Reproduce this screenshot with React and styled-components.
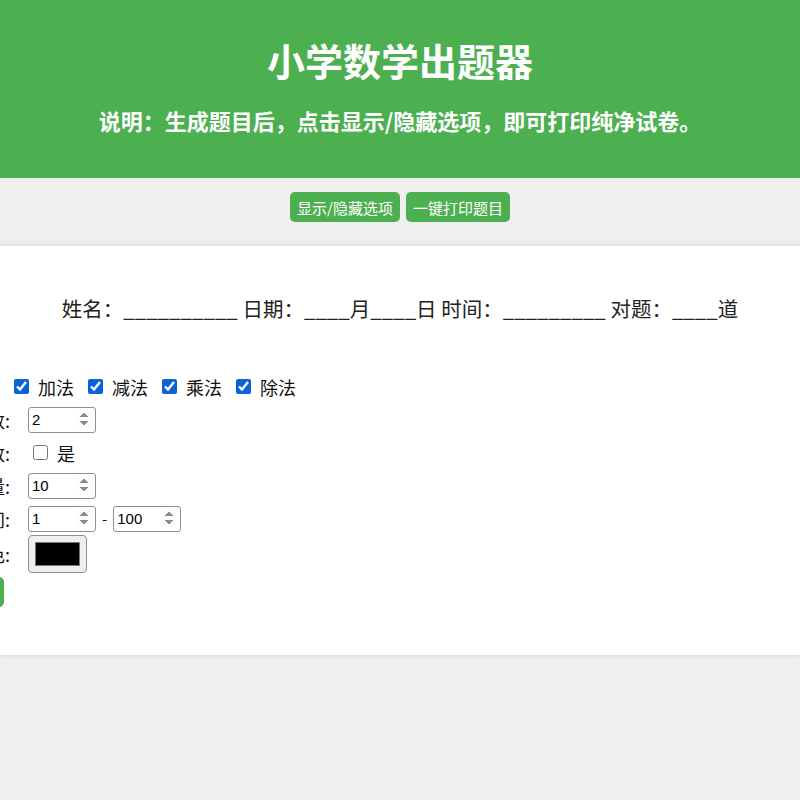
import React, { useState } from 'react';
import styled, { createGlobalStyle } from 'styled-components';

const GlobalStyle = createGlobalStyle`
  body {
    margin: 0;
    background: #efefef;
    font-family: "Noto Sans CJK SC", "Liberation Sans", sans-serif;
    overflow: hidden;
  }
`;

const App = () => {
  const [ops, setOps] = useState({ add: true, sub: true, mul: true, div: true });
  const [decimal, setDecimal] = useState(false);

  const toggle = (key) => setOps({ ...ops, [key]: !ops[key] });

  return (
    <Page>
      <GlobalStyle />
      <Header>
        <Title>小学数学出题器</Title>
        <Subtitle>说明：生成题目后，点击显示/隐藏选项，即可打印纯净试卷。</Subtitle>
      </Header>

      <Toolbar>
        <GreenButton>显示/隐藏选项</GreenButton>
        <GreenButton>一键打印题目</GreenButton>
      </Toolbar>

      <Paper>
        <InfoLine>
          姓名：__________ 日期：____月____日 时间：_________ 对题：____道
        </InfoLine>

        <Options>
          <Row>
            <Label left>运算:</Label>
            <CheckGroup>
              {[['add', '加法'], ['sub', '减法'], ['mul', '乘法'], ['div', '除法']].map(([key, text]) => (
                <CheckItem key={key}>
                  <CheckBox type="checkbox" checked={ops[key]} onChange={() => toggle(key)} />
                  {text}
                </CheckItem>
              ))}
            </CheckGroup>
          </Row>
          <Row>
            <Label>数字个数:</Label>
            <Control>
              <NumberInput type="number" defaultValue={2} />
            </Control>
          </Row>
          <Row>
            <Label>是否小数:</Label>
            <Control>
              <CheckItem indent>
                <CheckBox type="checkbox" checked={decimal} onChange={() => setDecimal(!decimal)} />
                是
              </CheckItem>
            </Control>
          </Row>
          <Row>
            <Label>题目数量:</Label>
            <Control>
              <NumberInput type="number" defaultValue={10} />
            </Control>
          </Row>
          <Row>
            <Label>数值区间:</Label>
            <Control>
              <NumberInput type="number" defaultValue={1} />
              <Dash>-</Dash>
              <NumberInput type="number" defaultValue={100} />
            </Control>
          </Row>
          <Row tall>
            <Label>字体颜色:</Label>
            <Control>
              <ColorInput type="color" defaultValue="#000000" />
            </Control>
          </Row>
          <GenerateButton>生成题目</GenerateButton>
        </Options>
      </Paper>
    </Page>
  );
};

// Styles
const Page = styled.div`
  min-height: 800px;
`;

const Header = styled.header`
  background: #4caf50;
  color: white;
  text-align: center;
  height: 178px;
  padding-top: 35px;
  box-sizing: border-box;
`;

const Title = styled.h1`
  margin: 0;
  font-size: 38px;
  font-weight: bold;
  line-height: 50px;
`;

const Subtitle = styled.p`
  margin: 20px 0 0;
  font-size: 22px;
  font-weight: bold;
  line-height: 30px;
`;

const Toolbar = styled.div`
  display: flex;
  justify-content: center;
  gap: 6px;
  padding: 14px 0 24px;
`;

const GreenButton = styled.button`
  background: #4caf50;
  color: white;
  border: none;
  border-radius: 5px;
  height: 30px;
  padding: 0 7px;
  font-family: inherit;
  font-size: 15px;
  cursor: pointer;
`;

const Paper = styled.div`
  background: white;
  box-shadow: 0 0 6px rgba(0, 0, 0, 0.12);
  padding: 47px 0 48px;
`;

const InfoLine = styled.div`
  text-align: center;
  font-size: 20.5px;
  line-height: 30px;
  color: #222;
  white-space: pre;
`;

const Options = styled.div`
  margin: 47px 0 0 -86px;
  display: flex;
  flex-direction: column;
  font-size: 18px;
  color: #111;
`;

const Row = styled.div`
  display: flex;
  align-items: center;
  height: ${props => (props.tall ? '38px' : '33px')};
  margin-bottom: ${props => (props.tall ? '4px' : '0')};
`;

const Label = styled.label`
  width: 96px;
  text-align: ${props => (props.left ? 'left' : 'right')};
  flex-shrink: 0;
`;

const Control = styled.div`
  display: flex;
  align-items: center;
  margin-left: 18px;
`;

const CheckGroup = styled.div`
  display: flex;
  align-items: center;
  gap: 14px;
  margin-left: 4px;
`;

const CheckItem = styled.span`
  display: flex;
  align-items: center;
  gap: 9px;
  margin-left: ${props => (props.indent ? '5px' : '0')};
`;

const CheckBox = styled.input`
  width: 15px;
  height: 15px;
  margin: 0;
  accent-color: #0b62d6;
`;

const NumberInput = styled.input`
  width: 68px;
  height: 26px;
  box-sizing: border-box;
  border: 1px solid #8f8f8f;
  border-radius: 3px;
  padding: 0 3px;
  font-family: "Liberation Sans", sans-serif;
  font-size: 15px;

  &::-webkit-inner-spin-button {
    opacity: 1;
  }
`;

const Dash = styled.span`
  margin: 0 6px;
  font-size: 15px;
`;

const ColorInput = styled.input`
  width: 59px;
  height: 38px;
  padding: 6px;
  box-sizing: border-box;
  border: 1px solid #8f8f8f;
  border-radius: 4px;
  background: #efefef;

  &::-webkit-color-swatch-wrapper {
    padding: 0;
  }

  &::-webkit-color-swatch {
    border: 1px solid #777;
  }
`;

const GenerateButton = styled.button`
  align-self: flex-start;
  width: 90px;
  height: 30px;
  background: #4caf50;
  color: white;
  border: none;
  border-radius: 5px;
  font-family: inherit;
  font-size: 15px;
`;

export default App;
